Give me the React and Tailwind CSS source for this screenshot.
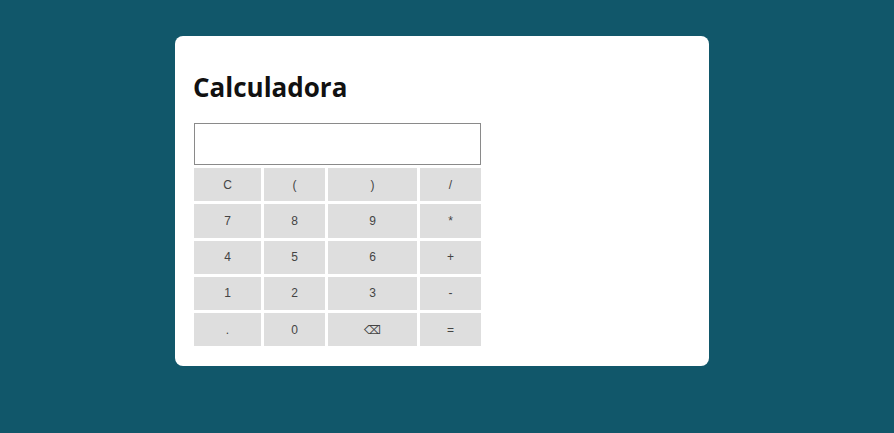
import React from "react";

const rows = [
  ["C", "(", ")", "/"],
  ["7", "8", "9", "*"],
  ["4", "5", "6", "+"],
  ["1", "2", "3", "-"],
  [".", "0", "⌫", "="],
];

export default function App() {
  return (
    <div className="min-h-[433px] w-full bg-[#11576a] pt-[36px] pl-[175px]">
      <div className="w-[534px] h-[330px] rounded-[8px] bg-white pl-[19px] pt-[33px]">
        <h1
          className="text-[26px] leading-[36px] font-bold text-[#111] -ml-[1px]"
          style={{ fontFamily: '"Open Sans", sans-serif' }}
        >
          Calculadora
        </h1>
        <div className="mt-[18px] w-[287px]">
          <div className="h-[42px] w-[287px] border border-[#8a8a8a] bg-white" />
          <div className="mt-[3px] grid grid-cols-[67px_61px_89px_61px] gap-x-[3px] gap-y-[3px]">
            {rows.flat().map((k, i) => (
              <div
                key={i}
                className="h-[33.25px] bg-[#dedede] flex items-center justify-center text-[12px] text-[#444]"
                style={{ fontFamily: '"Liberation Sans", Arial, "DejaVu Sans", sans-serif' }}
              >
                {k}
              </div>
            ))}
          </div>
        </div>
      </div>
    </div>
  );
}
